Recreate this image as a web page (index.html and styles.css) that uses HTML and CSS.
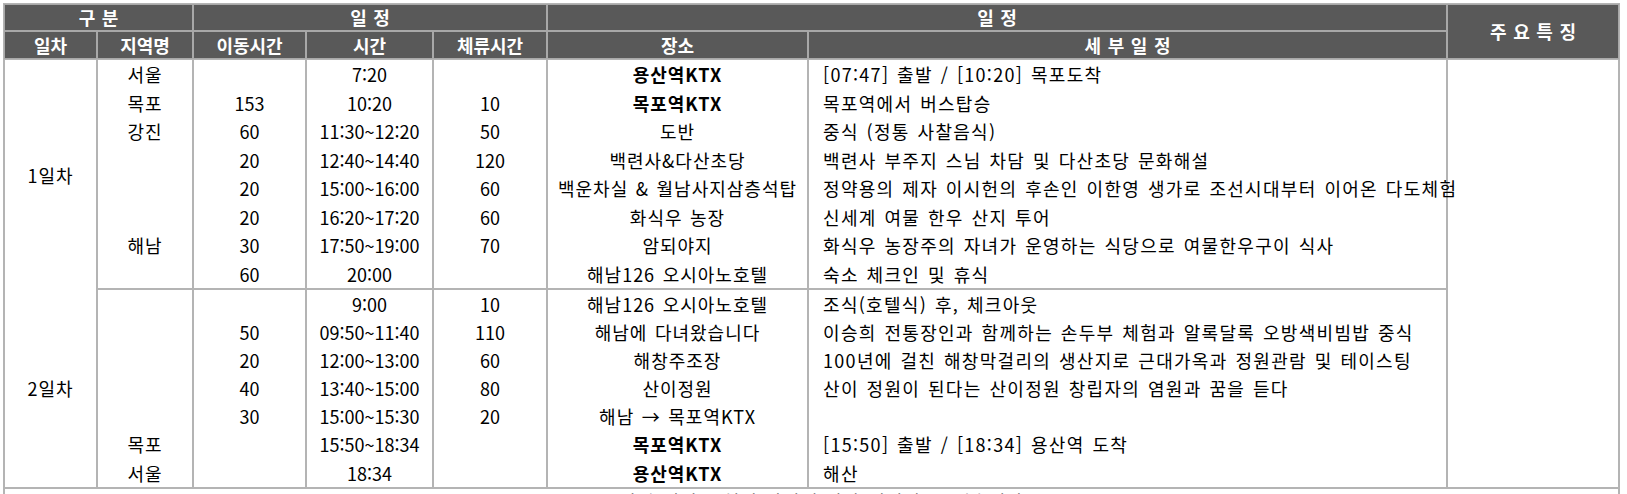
FILE: index.html
```html
<!DOCTYPE html>
<html lang="ko">
<head>
<meta charset="utf-8">
<title>일정표</title>
<link rel="stylesheet" href="styles.css">
</head>
<body>
<table class="sched">
  <colgroup>
    <col class="c-day"><col class="c-area"><col class="c-move"><col class="c-time"><col class="c-stay"><col class="c-place"><col class="c-detail"><col class="c-feat">
  </colgroup>
  <thead>
    <tr class="h1">
      <th colspan="2">구 분</th>
      <th colspan="3">일 정</th>
      <th colspan="2">일 정</th>
      <th rowspan="2">주 요 특 징</th>
    </tr>
    <tr class="h2">
      <th>일차</th>
      <th>지역명</th>
      <th>이동시간</th>
      <th>시간</th>
      <th>체류시간</th>
      <th>장소</th>
      <th>세 부 일 정</th>
    </tr>
  </thead>
  <tbody>
    <tr class="day1">
      <td rowspan="2" class="day ko">
        <div class="day-block d1">1일차</div>
        <div class="day-block d2">2일차</div>
      </td>
      <td class="ko">
        <div class="ln">서울</div><div class="ln">목포</div><div class="ln">강진</div><div class="ln"></div><div class="ln"></div><div class="ln"></div><div class="ln">해남</div><div class="ln"></div>
      </td>
      <td>
        <div class="ln"></div><div class="ln">153</div><div class="ln">60</div><div class="ln">20</div><div class="ln">20</div><div class="ln">20</div><div class="ln">30</div><div class="ln">60</div>
      </td>
      <td>
        <div class="ln">7:20</div><div class="ln">10:20</div><div class="ln">11:30~12:20</div><div class="ln">12:40~14:40</div><div class="ln">15:00~16:00</div><div class="ln">16:20~17:20</div><div class="ln">17:50~19:00</div><div class="ln">20:00</div>
      </td>
      <td>
        <div class="ln"></div><div class="ln">10</div><div class="ln">50</div><div class="ln">120</div><div class="ln">60</div><div class="ln">60</div><div class="ln">70</div><div class="ln"></div>
      </td>
      <td class="ko">
        <div class="ln strong">용산역KTX</div><div class="ln strong">목포역KTX</div><div class="ln">도반</div><div class="ln">백련사&amp;다산초당</div><div class="ln">백운차실 &amp; 월남사지삼층석탑</div><div class="ln">화식우 농장</div><div class="ln">암되야지</div><div class="ln">해남126 오시아노호텔</div>
      </td>
      <td class="detail">
        <div class="ln">[07:47] 출발 / [10:20] 목포도착</div>
        <div class="ln">목포역에서 버스탑승</div>
        <div class="ln">중식 (정통 사찰음식)</div>
        <div class="ln">백련사 부주지 스님 차담 및 다산초당 문화해설</div>
        <div class="ln">정약용의 제자 이시헌의 후손인 이한영 생가로 조선시대부터 이어온 다도체험</div>
        <div class="ln">신세계 여물 한우 산지 투어</div>
        <div class="ln">화식우 농장주의 자녀가 운영하는 식당으로 여물한우구이 식사</div>
        <div class="ln">숙소 체크인 및 휴식</div>
      </td>
      <td rowspan="2" class="feat"></td>
    </tr>
    <tr class="day2">
      <td class="ko">
        <div class="ln"></div><div class="ln"></div><div class="ln"></div><div class="ln"></div><div class="ln"></div><div class="ln">목포</div><div class="ln">서울</div>
      </td>
      <td>
        <div class="ln"></div><div class="ln">50</div><div class="ln">20</div><div class="ln">40</div><div class="ln">30</div><div class="ln"></div><div class="ln"></div>
      </td>
      <td>
        <div class="ln">9:00</div><div class="ln">09:50~11:40</div><div class="ln">12:00~13:00</div><div class="ln">13:40~15:00</div><div class="ln">15:00~15:30</div><div class="ln">15:50~18:34</div><div class="ln">18:34</div>
      </td>
      <td>
        <div class="ln">10</div><div class="ln">110</div><div class="ln">60</div><div class="ln">80</div><div class="ln">20</div><div class="ln"></div><div class="ln"></div>
      </td>
      <td class="ko">
        <div class="ln">해남126 오시아노호텔</div><div class="ln">해남에 다녀왔습니다</div><div class="ln">해창주조장</div><div class="ln">산이정원</div><div class="ln">해남 → 목포역KTX</div><div class="ln strong">목포역KTX</div><div class="ln strong">용산역KTX</div>
      </td>
      <td class="detail">
        <div class="ln">조식(호텔식) 후, 체크아웃</div>
        <div class="ln">이승희 전통장인과 함께하는 손두부 체험과 알록달록 오방색비빔밥 중식</div>
        <div class="ln">100년에 걸친 해창막걸리의 생산지로 근대가옥과 정원관람 및 테이스팅</div>
        <div class="ln">산이 정원이 된다는 산이정원 창립자의 염원과 꿈을 듣다</div>
        <div class="ln"></div>
        <div class="ln">[15:50] 출발 / [18:34] 용산역 도착</div>
        <div class="ln">해산</div>
      </td>
    </tr>
    <tr>
      <td colspan="8" class="note ko">※ 상기 일정은 현지 사정에 따라 변경될 수 있습니다.</td>
    </tr>
  </tbody>
</table>
</body>
</html>
```

FILE: styles.css
```css
html, body {
  margin: 0;
  background: #ffffff;
}

body {
  padding: 3px 0 0 3px;
  font-family: "Noto Sans CJK KR", "Noto Sans", "Liberation Sans", sans-serif;
  font-size: 18px;
  word-spacing: 1.5px;
  color: #000000;
}

.sched {
  width: 1617px;
  table-layout: fixed;
  border-collapse: separate;
  border-spacing: 0;
  border: 1px solid #b4b4b4;
}

.c-day { width: 93px; }
.c-area { width: 96px; }
.c-move { width: 113px; }
.c-time { width: 127px; }
.c-stay { width: 114px; }
.c-place { width: 261px; }
.c-detail { width: 639px; }
.c-feat { width: 172px; }

.sched th {
  background: #595959;
  color: #ffffff;
  font-weight: 700;
  border: 1px solid #a8a8a8;
  padding: 0;
  text-align: center;
  white-space: nowrap;
}

.h1 th { height: 25px; line-height: 25px; }
.h2 th { height: 26px; line-height: 26px; }

.sched td {
  border: 1px solid #b4b4b4;
  padding: 0;
  text-align: center;
  vertical-align: top;
  overflow: visible;
}

.sched td.ko {
  letter-spacing: 1px;
}

.ln {
  white-space: nowrap;
}

.day1 .ln {
  height: 28.5px;
  line-height: 28.5px;
}

.day2 .ln {
  height: 28.1px;
  line-height: 28.1px;
}

.strong { font-weight: 700; }

.sched td.detail {
  text-align: left;
  padding-left: 14px;
  letter-spacing: 1.3px;
}

.day-block {
  display: flex;
  align-items: center;
  justify-content: center;
}

.d1 { height: 229px; }
.d2 { height: 197.7px; }

.sched td.note {
  line-height: 25px;
  height: 28px;
  text-align: center;
  vertical-align: top;
}
```
